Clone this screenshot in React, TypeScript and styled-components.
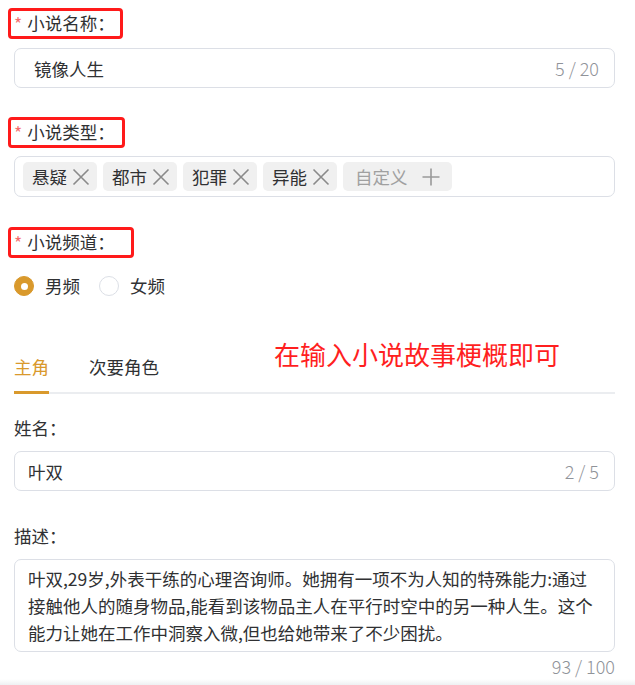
import styled, { createGlobalStyle } from "styled-components";

const GOLD = "#d9992c";

const GlobalStyle = createGlobalStyle`
    body {
        margin: 0;
        background: #fff;
        font-family: "Noto Sans CJK SC", "Noto Sans", sans-serif;
        color: #303133;
    }
`;

const Page = styled.main`
    width: 635px;
    height: 685px;
    overflow: hidden;
    box-sizing: border-box;
    padding: 8px 20px 0 14px;
    display: flex;
    flex-direction: column;
    font-size: 17.5px;
`;

const Marked = styled.div<{ $w: number; $top: number }>`
    width: ${(p) => p.$w}px;
    margin: ${(p) => p.$top}px 0 0 -6px;
    box-sizing: border-box;
    border: 3px solid #ff1a1a;
    border-radius: 4px;
    padding: 0 0 1px 3px;
    display: flex;
    align-items: center;
    line-height: 24px;
`;

const Star = styled.span`
    color: #f56c6c;
    margin-right: 5px;
    position: relative;
    top: 1px;
`;

const Label = styled.div<{ $top: number }>`
    margin-top: ${(p) => p.$top}px;
    line-height: 24px;
`;

const InputBox = styled.div<{ $top: number; $pl: number }>`
    margin-top: ${(p) => p.$top}px;
    height: 40px;
    box-sizing: border-box;
    border: 1px solid #dcdfe6;
    border-radius: 7px;
    display: flex;
    align-items: center;
    justify-content: space-between;
    padding: 0 15px 0 ${(p) => p.$pl}px;
`;

const Count = styled.span`
    color: #909399;
    font-size: 18px;
    font-weight: 300;
`;

const TagBox = styled.div`
    margin-top: 8px;
    height: 41px;
    box-sizing: border-box;
    border: 1px solid #dcdfe6;
    border-radius: 7px;
    display: flex;
    align-items: center;
    gap: 6px;
    padding: 0 8px;
`;

const Tag = styled.span<{ $add?: boolean }>`
    height: 29px;
    display: flex;
    align-items: center;
    gap: ${(p) => (p.$add ? 14 : 5)}px;
    padding: 0 ${(p) => (p.$add ? 12 : 7)}px 0 ${(p) => (p.$add ? 12 : 9)}px;
    background: #f0f0f0;
    border-radius: 5px;
    color: ${(p) => (p.$add ? "#a0a0a0" : "#303133")};
`;

const RadioRow = styled.div`
    margin-top: 16px;
    display: flex;
    align-items: center;
    line-height: 24px;
`;

const Radio = styled.label`
    display: flex;
    align-items: center;
    gap: 11px;
    margin-right: 19px;
`;

const Dot = styled.span<{ $on?: boolean }>`
    width: 20px;
    height: 20px;
    box-sizing: border-box;
    border-radius: 50%;
    border: 1px solid ${(p) => (p.$on ? GOLD : "#dcdfe6")};
    background: ${(p) => (p.$on ? GOLD : "#fff")};
    display: flex;
    align-items: center;
    justify-content: center;
    &::after {
        content: "";
        width: 7px;
        height: 7px;
        border-radius: 50%;
        background: #fff;
        display: ${(p) => (p.$on ? "block" : "none")};
    }
`;

const TabBar = styled.div`
    margin-top: 44px;
    display: flex;
    align-items: flex-start;
    border-bottom: 2px solid #ebedf0;
`;

const TabItem = styled.div<{ $active?: boolean }>`
    height: 52px;
    box-sizing: border-box;
    display: flex;
    align-items: center;
    margin: 0 40px -2px 0;
    border-bottom: 3px solid ${(p) => (p.$active ? GOLD : "transparent")};
    color: ${(p) => (p.$active ? GOLD : "#303133")};
`;

const Note = styled.div`
    margin: -3px 0 0 75px;
    font-size: 26px;
    line-height: 30px;
    color: #ff1f1f;
`;

const TextArea = styled.textarea`
    margin-top: 11px;
    height: 93px;
    box-sizing: border-box;
    border: 1px solid #dcdfe6;
    border-radius: 7px;
    padding: 5px 15px 5px 13px;
    resize: none;
    font-family: inherit;
    font-size: 17.5px;
    line-height: 27px;
    color: #303133;
    outline: none;
    overflow: hidden;
`;

const AreaCount = styled.div`
    margin-top: 2px;
    text-align: right;
    line-height: 24px;
    color: #909399;
    font-size: 18px;
    font-weight: 300;
`;

const Fade = styled.div`
    margin: auto -20px 0 -14px;
    height: 6px;
    background: linear-gradient(to bottom, #ffffff, #eef0f2);
`;

function CloseIcon() {
    return (
        <svg width="18" height="18" viewBox="0 0 18 18">
            <path d="M1.5 1.5 16.5 16.5 M16.5 1.5 1.5 16.5" stroke="#8a8a8a" strokeWidth="1.6" fill="none" />
        </svg>
    );
}

function PlusIcon() {
    return (
        <svg width="18" height="18" viewBox="0 0 18 18">
            <path d="M9 0.5V17.5 M0.5 9H17.5" stroke="#999" strokeWidth="1.6" fill="none" />
        </svg>
    );
}

const tags = ["悬疑", "都市", "犯罪", "异能"];

const desc =
    "叶双,29岁,外表干练的心理咨询师。她拥有一项不为人知的特殊能力:通过接触他人的随身物品,能看到该物品主人在平行时空中的另一种人生。这个能力让她在工作中洞察入微,但也给她带来了不少困扰。";

export default function App() {
    return (
        <Page>
            <GlobalStyle />
            <Marked $w={115} $top={0}>
                <Star>*</Star>小说名称：
            </Marked>
            <InputBox $top={9} $pl={19}>
                <span>镜像人生</span>
                <Count>5 / 20</Count>
            </InputBox>

            <Marked $w={117} $top={29}>
                <Star>*</Star>小说类型：
            </Marked>
            <TagBox>
                {tags.map((t) => (
                    <Tag key={t}>
                        {t}
                        <CloseIcon />
                    </Tag>
                ))}
                <Tag $add>
                    自定义
                    <PlusIcon />
                </Tag>
            </TagBox>

            <Marked $w={126} $top={30}>
                <Star>*</Star>小说频道：
            </Marked>
            <RadioRow>
                <Radio>
                    <Dot $on />
                    男频
                </Radio>
                <Radio>
                    <Dot />
                    女频
                </Radio>
            </RadioRow>

            <TabBar>
                <TabItem $active>主角</TabItem>
                <TabItem>次要角色</TabItem>
                <Note>在输入小说故事梗概即可</Note>
            </TabBar>

            <Label $top={22}>姓名：</Label>
            <InputBox $top={11} $pl={13}>
                <span>叶双</span>
                <Count>2 / 5</Count>
            </InputBox>

            <Label $top={33}>描述：</Label>
            <TextArea readOnly value={desc} />
            <AreaCount>93 / 100</AreaCount>
            <Fade />
        </Page>
    );
}
